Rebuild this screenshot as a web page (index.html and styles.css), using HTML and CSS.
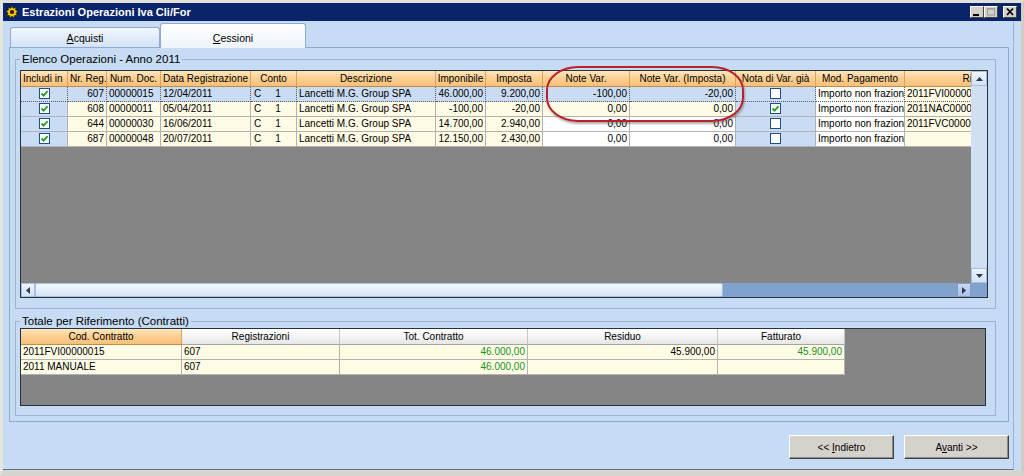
FILE: index.html
```html
<!DOCTYPE html>
<html lang="it">
<head>
<meta charset="utf-8">
<title>Estrazioni Operazioni Iva Cli/For</title>
<link rel="stylesheet" href="styles.css">
</head>
<body>
<div class="window">
  <div class="titlebar">
    <svg class="app-icon" viewBox="0 0 14 14" width="14" height="14">
      <path d="M7 1 L8.2 3.2 L10.8 2.4 L10.6 5 L13 6.2 L11 8 L12.2 10.4 L9.6 10.6 L8.6 13 L7 11 L5.4 13 L4.4 10.6 L1.8 10.4 L3 8 L1 6.2 L3.4 5 L3.2 2.4 L5.8 3.2Z" fill="#f4c400" stroke="#2a2200" stroke-width="0.7"/>
      <circle cx="7" cy="7" r="2.1" fill="#1d1d1d"/>
    </svg>
    <span class="title">Estrazioni Operazioni Iva Cli/For</span>
    <div class="wbtns">
      <span class="wbtn"><svg viewBox="0 0 12 10" width="12" height="10"><rect x="2" y="7" width="6" height="2" fill="#000"/></svg></span>
      <span class="wbtn"><svg viewBox="0 0 12 10" width="12" height="10"><rect x="2.5" y="1.5" width="7" height="6.5" fill="none" stroke="#9a9a9a"/><rect x="2" y="1" width="8" height="1.5" fill="#9a9a9a"/></svg></span>
      <span class="wbtn close"><svg viewBox="0 0 12 10" width="12" height="10"><path d="M3 1.5 L9 8 M9 1.5 L3 8" stroke="#000" stroke-width="1.7"/></svg></span>
    </div>
  </div>

  <div class="client">
    <div class="tabs">
      <div class="tab"><span><u>A</u>cquisti</span></div>
      <div class="tab active"><span><u>C</u>essioni</span></div>
    </div>

    <div class="panel">
      <fieldset class="group group-ops">
        <legend>Elenco Operazioni - Anno 2011</legend>
        <div class="grid grid-ops">
          <div class="grid-main">
            <div class="grid-body">
              <table class="tbl ops">
                <tr>
                  <th class="c-inc hl">Includi in</th>
                  <th class="c-nr hl">Nr. Reg.</th>
                  <th class="c-doc">Num. Doc.</th>
                  <th class="c-data">Data Registrazione</th>
                  <th class="c-conto">Conto</th>
                  <th class="c-desc">Descrizione</th>
                  <th class="c-imp">Imponibile</th>
                  <th class="c-iva">Imposta</th>
                  <th class="c-nv">Note Var.</th>
                  <th class="c-nvi">Note Var. (Imposta)</th>
                  <th class="c-nd">Nota di Var. già</th>
                  <th class="c-mod">Mod. Pagamento</th>
                  <th class="c-rif">Riferimento</th>
                </tr>
                <tr class="sel">
                  <td class="chk"><span class="cb"><svg viewBox="0 0 9 9"><path d="M1.5 4.5 L3.6 6.6 L7.6 2.2"/></svg></span></td>
                  <td class="num">607</td>
                  <td>00000015</td>
                  <td>12/04/2011</td>
                  <td class="conto"><span>C</span><span class="cn">1</span></td>
                  <td>Lancetti M.G. Group SPA</td>
                  <td class="num">46.000,00</td>
                  <td class="num">9.200,00</td>
                  <td class="num">-100,00</td>
                  <td class="num">-20,00</td>
                  <td class="chk"><span class="cb"></span></td>
                  <td class="w">Importo non frazionato</td>
                  <td class="cr">2011FVI00000015</td>
                </tr>
                <tr>
                  <td class="chk"><span class="cb"><svg viewBox="0 0 9 9"><path d="M1.5 4.5 L3.6 6.6 L7.6 2.2"/></svg></span></td>
                  <td class="num">608</td>
                  <td>00000011</td>
                  <td>05/04/2011</td>
                  <td class="conto"><span>C</span><span class="cn">1</span></td>
                  <td>Lancetti M.G. Group SPA</td>
                  <td class="num">-100,00</td>
                  <td class="num">-20,00</td>
                  <td class="num">0,00</td>
                  <td class="num">0,00</td>
                  <td class="chk"><span class="cb"><svg viewBox="0 0 9 9"><path d="M1.5 4.5 L3.6 6.6 L7.6 2.2"/></svg></span></td>
                  <td class="w">Importo non frazionato</td>
                  <td class="cr">2011NAC00000011</td>
                </tr>
                <tr>
                  <td class="chk"><span class="cb"><svg viewBox="0 0 9 9"><path d="M1.5 4.5 L3.6 6.6 L7.6 2.2"/></svg></span></td>
                  <td class="num">644</td>
                  <td>00000030</td>
                  <td>16/06/2011</td>
                  <td class="conto"><span>C</span><span class="cn">1</span></td>
                  <td>Lancetti M.G. Group SPA</td>
                  <td class="num">14.700,00</td>
                  <td class="num">2.940,00</td>
                  <td class="num w">0,00</td>
                  <td class="num w">0,00</td>
                  <td class="chk"><span class="cb"></span></td>
                  <td class="w">Importo non frazionato</td>
                  <td class="cr">2011FVC00000030</td>
                </tr>
                <tr>
                  <td class="chk"><span class="cb"><svg viewBox="0 0 9 9"><path d="M1.5 4.5 L3.6 6.6 L7.6 2.2"/></svg></span></td>
                  <td class="num">687</td>
                  <td>00000048</td>
                  <td>20/07/2011</td>
                  <td class="conto"><span>C</span><span class="cn">1</span></td>
                  <td>Lancetti M.G. Group SPA</td>
                  <td class="num">12.150,00</td>
                  <td class="num">2.430,00</td>
                  <td class="num w">0,00</td>
                  <td class="num w">0,00</td>
                  <td class="chk"><span class="cb"></span></td>
                  <td class="w">Importo non frazionato</td>
                  <td class="cr"></td>
                </tr>
              </table>
            </div>
            <div class="vscroll">
              <div class="sbtn"><svg viewBox="0 0 7 4" width="7" height="4"><path d="M0 4 L3.5 0 L7 4Z"/></svg></div>
              <div class="vtrack"></div>
              <div class="sbtn"><svg viewBox="0 0 7 4" width="7" height="4"><path d="M0 0 L3.5 4 L7 0Z"/></svg></div>
            </div>
          </div>
          <div class="hscroll">
            <div class="sbtn hbtn"><svg viewBox="0 0 4 7" width="4" height="7"><path d="M4 0 L0 3.5 L4 7Z"/></svg></div>
            <div class="hthumb"></div>
            <div class="htrack"></div>
            <div class="sbtn hbtn right"><svg viewBox="0 0 4 7" width="4" height="7"><path d="M0 0 L4 3.5 L0 7Z"/></svg></div>
            <div class="hcorner"></div>
          </div>
        </div>
      </fieldset>

      <fieldset class="group group-tot">
        <legend>Totale per Riferimento (Contratti)</legend>
        <div class="grid grid-tot">
          <table class="tbl tot">
            <tr>
              <th class="k-cod">Cod. Contratto</th>
              <th class="k-reg lt">Registrazioni</th>
              <th class="k-tot lt">Tot. Contratto</th>
              <th class="k-res lt">Residuo</th>
              <th class="k-fat lt">Fatturato</th>
            </tr>
            <tr>
              <td>2011FVI00000015</td>
              <td>607</td>
              <td class="num g">46.000,00</td>
              <td class="num">45.900,00</td>
              <td class="num g">45.900,00</td>
            </tr>
            <tr>
              <td>2011 MANUALE</td>
              <td>607</td>
              <td class="num g">46.000,00</td>
              <td></td>
              <td></td>
            </tr>
          </table>
        </div>
      </fieldset>
    </div>

    <div class="actions">
      <button class="btn" type="button"><span>&lt;&lt; <u>I</u>ndietro</span></button>
      <button class="btn" type="button"><span>A<u>v</u>anti &gt;&gt;</span></button>
    </div>
  </div>

  <div class="callout"></div>
</div>
</body>
</html>
```

FILE: styles.css
```css
* { box-sizing: border-box; }
html, body { margin: 0; padding: 0; }
body {
  width: 1024px;
  height: 476px;
  overflow: hidden;
  font-family: "Liberation Sans", Arial, sans-serif;
  font-size: 10px;
  color: #000;
  background: #d4d0c8;
}

.window {
  position: relative;
  width: 1024px;
  height: 476px;
  display: flex;
  flex-direction: column;
  background: #c6dbf4;
  border-top: 3px solid #e2e0da;
  border-left: 3px solid #e6e4df;
  border-right: 3px solid #cfccc5;
  border-bottom: 6px solid #d7d4ce;
}

/* title bar */
.titlebar {
  flex: none;
  height: 18px;
  background: #0a246a;
  display: flex;
  align-items: center;
  padding: 0 4px 0 2px;
}
.app-icon { flex: none; width: 14px; height: 14px; display: block; }
.title {
  margin-left: 3px;
  color: #fff;
  font-weight: bold;
  font-size: 11px;
  white-space: nowrap;
}
.wbtns { margin-left: auto; display: flex; }
.wbtn {
  width: 14px;
  height: 12px;
  background: #d4d0c8;
  border: 1px solid;
  border-color: #fff #404040 #404040 #fff;
  display: flex;
  align-items: center;
  justify-content: center;
}
.wbtn svg { display: block; }
.wbtn.close { margin-left: 5px; }

/* client area */
.client {
  flex: 1;
  display: flex;
  flex-direction: column;
  padding: 0 4px 0 6px;
  margin-right: 7px;
  border-right: 1px solid #98b3d8;
  border-bottom: 1px solid #5f7088;
}

.tabs {
  flex: none;
  height: 26px;
  display: flex;
  align-items: flex-end;
  padding-left: 1px;
  position: relative;
  z-index: 1;
}
.tab {
  width: 150px;
  height: 20px;
  border: 1px solid #8fa9cf;
  border-bottom: none;
  border-radius: 3px 3px 0 0;
  background: linear-gradient(#f1f6fd, #d4e3f6);
  font-size: 10.5px;
  display: flex;
  align-items: flex-end;
  justify-content: center;
  padding-bottom: 3px;
  line-height: 12px;
}
.tab.active {
  width: 146px;
  height: 25px;
  margin-bottom: -1px;
  background: linear-gradient(#ffffff, #eef4fc);
  padding-bottom: 4px;
}

.panel {
  flex: none;
  height: 375px;
  border: 1px solid #8eaad0;
  padding: 5px 0 0 5px;
  display: flex;
  flex-direction: column;
  gap: 6px;
}

.group {
  margin: 0;
  padding: 0 0 10px 4px;
  width: 981px;
  min-width: 0;
  border: 1px solid #9fb3cd;
}
.group legend {
  padding: 0 2px;
  margin: 0;
  font-size: 11.5px;
  line-height: 13px;
  height: 13px;
  white-space: nowrap;
}
.group-ops { padding-top: 4px; }
.group-tot { padding-top: 0; padding-bottom: 9px; }

/* grids */
.grid {
  border: 1px solid #28303c;
  background: #858585;
  overflow: hidden;
}
.grid-ops {
  width: 968px;
  height: 228px;
  display: flex;
  flex-direction: column;
}
.grid-main { flex: 1; display: flex; min-height: 0; }
.grid-body { width: 950px; overflow: hidden; }

.vscroll {
  width: 16px;
  display: flex;
  flex-direction: column;
  background: #cfdff4;
}
.vtrack { flex: 1; }
.sbtn {
  flex: none;
  width: 16px;
  height: 15px;
  display: flex;
  align-items: center;
  justify-content: center;
  background: linear-gradient(#eef4fc, #d2e1f5);
  border: 1px solid #a8bfdf;
}
.sbtn svg { display: block; fill: #2b3a52; }

.hscroll {
  flex: none;
  height: 14px;
  display: flex;
  background: #80a3ce;
}
.hbtn { width: 14px; height: 14px; }
.hbtn.right { background: linear-gradient(#c9d9ee, #aac3e3); border-color: #7f9fc8; }
.hthumb {
  width: 688px;
  background: linear-gradient(#f4f8fd, #d6e4f6);
  border: 1px solid #a9c0df;
  border-radius: 2px;
}
.htrack { flex: 1; }
.hcorner { width: 16px; }

/* tables */
.tbl {
  border-collapse: separate;
  border-spacing: 0;
  table-layout: fixed;
}
.ops { width: 1051px; }
.tot { width: 824px; }

.tbl th,
.tbl td {
  padding: 0 2px;
  height: 15px;
  line-height: 14px;
  white-space: nowrap;
  overflow: hidden;
  text-overflow: clip;
  font-weight: normal;
  font-size: 10px;
  border-right: 1px solid #b2b2b2;
  border-bottom: 1px solid #b2b2b2;
  text-align: left;
  vertical-align: middle;
}
.tbl th {
  height: 16px;
  line-height: 15px;
  text-align: center;
  padding: 0 1px;
  background: linear-gradient(#fee7c0, #fbd194 45%, #f8c07a);
  border-right-color: #dca35f;
  border-bottom-color: #c48c46;
}
.tbl th.hl { text-align: left; padding-left: 2px; }
.tbl th.lt {
  background: linear-gradient(#ffffff, #f4f4f4 50%, #e6e6e6);
  border-right-color: #c6c6c6;
  border-bottom-color: #a4a4a4;
}

.c-inc { width: 47px; }
.c-nr { width: 39px; }
.c-doc { width: 54px; }
.c-data { width: 90px; }
.c-conto { width: 46px; }
.c-desc { width: 139px; }
.c-imp { width: 50px; }
.c-iva { width: 57px; }
.c-nv { width: 87px; }
.c-nvi { width: 106px; }
.c-nd { width: 80px; }
.c-mod { width: 89px; }
.c-rif { width: 167px; }

.k-cod { width: 161px; }
.k-reg { width: 158px; }
.k-tot { width: 188px; }
.k-res { width: 190px; }
.k-fat { width: 127px; }

.tbl td { background: #fffbe4; }
.tbl td.num { text-align: right; }
.tbl td.conto { padding-left: 3px; }
.tbl td.conto .cn { margin-left: 14px; }
.tbl td.g { color: #17921b; }

.ops tr td.w { background: #ffffff; }
.ops tr td.cr { background: #fffbe4; }
.ops tr.sel td { background: #cadcf3; border-right: 1px dotted #5a5a5a; border-bottom: 1px dotted #5a5a5a; }
.ops tr.sel td.w { background: #fbfbf8; }
.ops tr.sel td.cr { background: #fffbe4; }
.ops tr td.chk { background: #cadcf3; text-align: center; padding: 0; }

.cb {
  display: inline-block;
  width: 11px;
  height: 11px;
  border: 1px solid #1d4f86;
  background: #fff;
  vertical-align: middle;
  margin-top: -2px;
}
.cb svg {
  display: block;
  width: 9px;
  height: 9px;
  fill: none;
  stroke: #1fa01f;
  stroke-width: 1.8;
}

.tot td { background: #fffce6; }

.grid-tot { width: 966px; height: 78px; }

/* buttons */
.actions {
  flex: none;
  display: flex;
  justify-content: flex-end;
  gap: 10px;
  margin-top: 13px;
}
.btn {
  width: 105px;
  height: 24px;
  margin: 0;
  padding: 0;
  background: #d5d2cc;
  border: 1px solid;
  border-color: #ffffff #404040 #404040 #ffffff;
  box-shadow: inset -1px -1px 0 #8a8a8a;
  font-family: "Liberation Sans", Arial, sans-serif;
  font-size: 10px;
  color: #000;
  display: flex;
  align-items: center;
  justify-content: center;
  white-space: pre;
}

/* red annotation around the Note Var. columns */
.callout {
  position: absolute;
  left: 543px;
  top: 63px;
  width: 198px;
  height: 56px;
  border: 2px solid #b9212b;
  border-radius: 32px / 24px;
  box-shadow: 1px 2px 2px rgba(80, 80, 80, 0.45);
  pointer-events: none;
}
```
